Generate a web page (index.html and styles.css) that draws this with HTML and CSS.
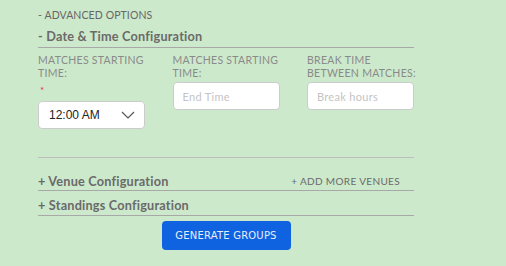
FILE: index.html
```html
<!DOCTYPE html>
<html lang="en">
<head>
    <meta charset="UTF-8">
    <meta name="viewport" content="width=device-width, initial-scale=1.0">
    <title>Advanced Options</title>
    <link rel="stylesheet" href="styles.css">
</head>
<body>
    <div class="panel">
        <div class="toggle">- ADVANCED OPTIONS</div>
        <div class="section-title">- Date &amp; Time Configuration</div>

        <div class="fields">
            <div class="field">
                <label>MATCHES STARTING<br>TIME:</label>
                <span class="required">*</span>
                <div class="select">
                    <span>12:00 AM</span>
                    <svg width="14" height="8" viewBox="0 0 14 8"><path d="M1 1l6 6 6-6" fill="none" stroke="#555" stroke-width="1.2"/></svg>
                </div>
            </div>
            <div class="field">
                <label>MATCHES STARTING<br>TIME:</label>
                <input type="text" placeholder="End Time">
            </div>
            <div class="field">
                <label>BREAK TIME<br>BETWEEN MATCHES:</label>
                <input type="text" placeholder="Break hours">
            </div>
        </div>

        <div class="divider"></div>

        <div class="section-title row">
            <span>+ Venue Configuration</span>
            <span class="add-link">+ ADD MORE VENUES</span>
        </div>
        <div class="section-title">+ Standings Configuration</div>

        <div class="actions">
            <button class="btn-primary">GENERATE GROUPS</button>
        </div>
    </div>
</body>
</html>
```

FILE: styles.css
```css
body {
    margin: 0;
    background-color: #cde9cb;
    font-family: Lato, "Open Sans", sans-serif;
    color: #666;
}
.panel {
    width: 376px;
    margin-left: 38px;
    padding-top: 8px;
}
.toggle {
    font-size: 10.5px;
    line-height: 14px;
    color: #666;
    letter-spacing: 0.1px;
}
.section-title {
    font-size: 12.7px;
    font-weight: bold;
    line-height: 18px;
    color: #6a6a6a;
    border-bottom: 1px solid #a8a8a8;
    padding-top: 5px;
    padding-bottom: 2px;
    letter-spacing: 0.2px;
}
.section-title.row {
    display: flex;
    justify-content: space-between;
    align-items: center;
    padding-top: 6px;
    padding-bottom: 0;
}
.section-title.row + .section-title {
    padding-top: 5px;
    padding-bottom: 1px;
}
.add-link {
    font-size: 10px;
    font-weight: normal;
    letter-spacing: 0.35px;
    margin-right: 14px;
}
.fields {
    display: grid;
    grid-template-columns: 107px 107px 107px;
    justify-content: space-between;
    padding-top: 6px;
}
.field {
    display: flex;
    flex-direction: column;
}
.field label {
    font-size: 10.5px;
    line-height: 13px;
    letter-spacing: 0.3px;
    white-space: nowrap;
    color: #8a8a8a;
    height: 26px;
    margin-bottom: 2px;
}
.required {
    color: #e0303a;
    font-size: 10px;
    line-height: 10px;
    height: 10px;
    margin: 3px 0 6px 2px;
}
.select {
    display: flex;
    justify-content: space-between;
    align-items: center;
    height: 28px;
    box-sizing: border-box;
    padding: 0 9px 0 10px;
    background: #fff;
    border: 1px solid #ccc;
    border-radius: 4px;
    font-family: "Liberation Sans", Arial, sans-serif;
    font-size: 12px;
    color: #222;
}
.field input {
    height: 28px;
    box-sizing: border-box;
    border: 1px solid #ccc;
    border-radius: 4px;
    padding: 0 9px;
    font-family: Lato, sans-serif;
    font-size: 11px;
    letter-spacing: 0.3px;
    background: #fff;
}
.field input::placeholder {
    color: #c4c4c4;
}
.divider {
    border-top: 1px solid #bdbdbd;
    margin-top: 28px;
    margin-bottom: 8px;
}
.actions {
    display: flex;
    justify-content: center;
    padding-top: 5px;
}
.btn-primary {
    background-color: #0f63e0;
    color: #e8eef9;
    border: none;
    border-radius: 4px;
    width: 129px;
    height: 29px;
    font-family: "DejaVu Sans", sans-serif;
    font-size: 10px;
    letter-spacing: 0.2px;
}
```
